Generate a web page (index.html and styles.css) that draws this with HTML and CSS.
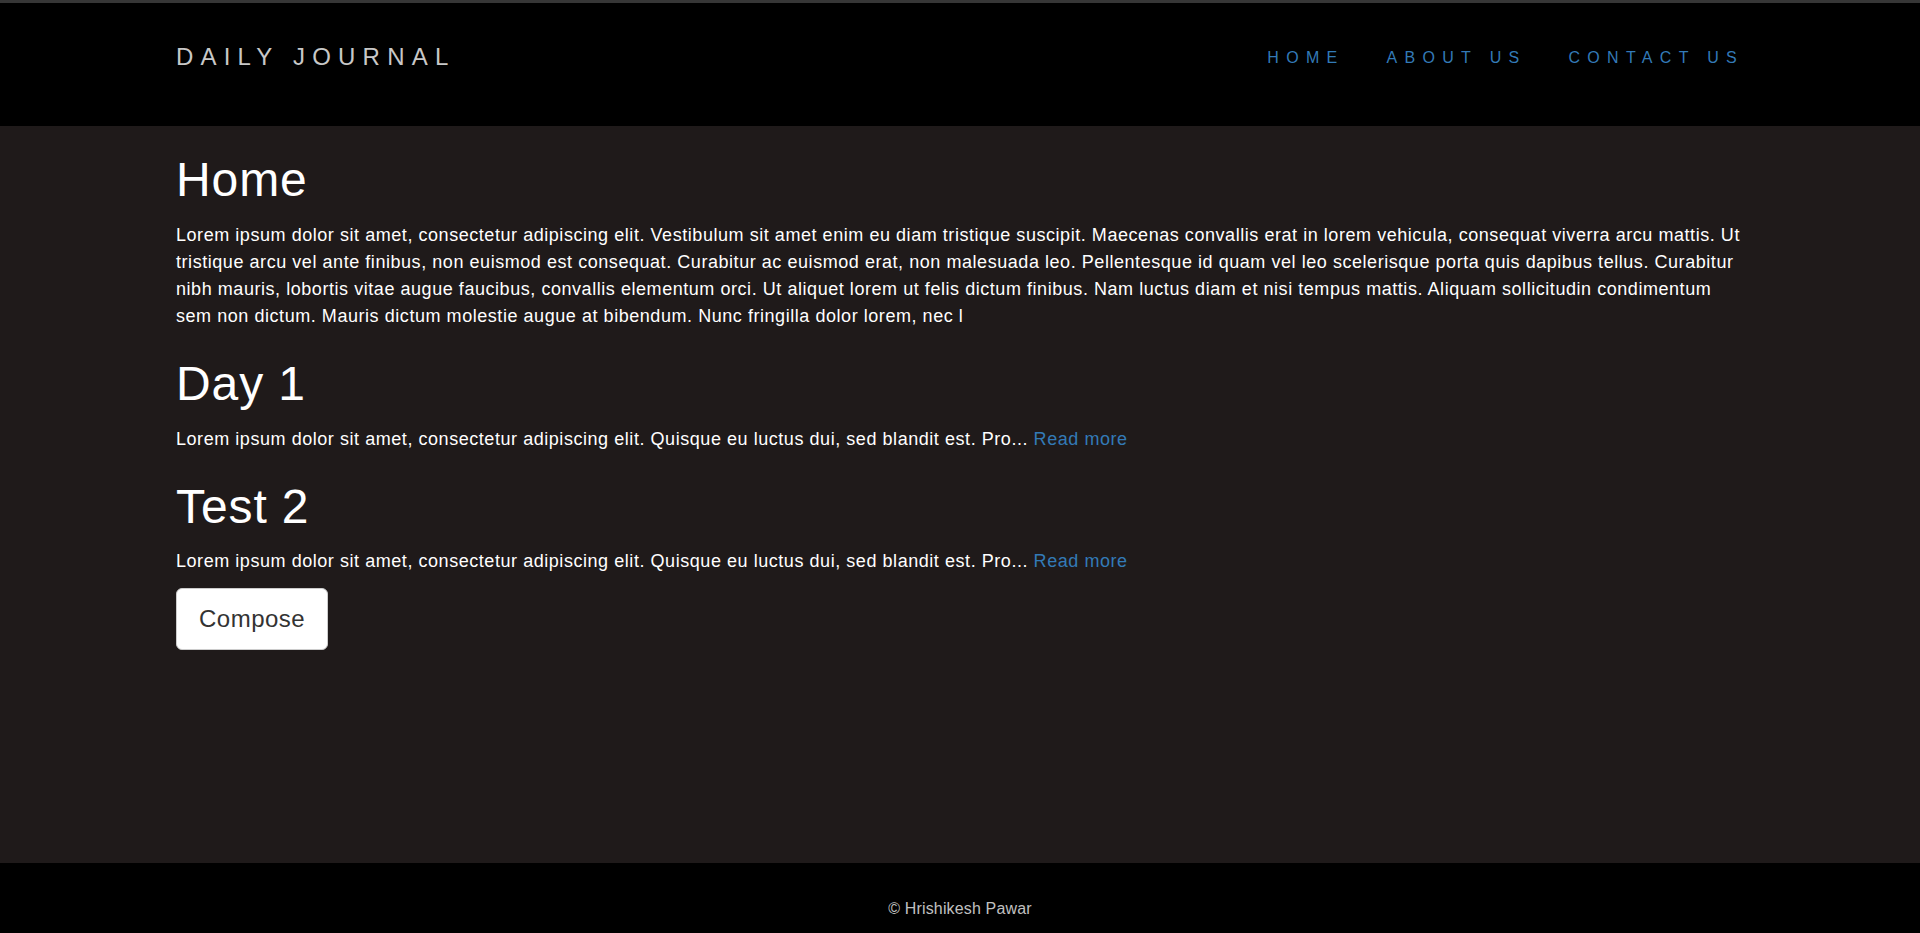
FILE: index.html
```html
<!DOCTYPE html>
<html lang="en">
<head>
<meta charset="utf-8">
<title>Daily Journal</title>
<link rel="stylesheet" href="styles.css">
</head>
<body>
<header class="site-header">
  <div class="container header-inner">
    <a class="brand" href="#">Daily Journal</a>
    <nav class="main-nav">
      <a href="#">Home</a>
      <a href="#">About Us</a>
      <a href="#">Contact Us</a>
    </nav>
  </div>
</header>
<main class="site-main">
  <div class="container">
    <h1 class="title">Home</h1>
    <p class="text">Lorem ipsum dolor sit amet, consectetur adipiscing elit. Vestibulum sit amet enim eu diam tristique suscipit. Maecenas convallis erat in lorem vehicula, consequat viverra arcu mattis. Ut tristique arcu vel ante finibus, non euismod est consequat. Curabitur ac euismod erat, non malesuada leo. Pellentesque id quam vel leo scelerisque porta quis dapibus tellus. Curabitur nibh mauris, lobortis vitae augue faucibus, convallis elementum orci. Ut aliquet lorem ut felis dictum finibus. Nam luctus diam et nisi tempus mattis. Aliquam sollicitudin condimentum sem non dictum. Mauris dictum molestie augue at bibendum. Nunc fringilla dolor lorem, nec l</p>

    <h1 class="title">Day 1</h1>
    <p class="text">Lorem ipsum dolor sit amet, consectetur adipiscing elit. Quisque eu luctus dui, sed blandit est. Pro... <a class="more" href="#">Read more</a></p>

    <h1 class="title">Test 2</h1>
    <p class="text">Lorem ipsum dolor sit amet, consectetur adipiscing elit. Quisque eu luctus dui, sed blandit est. Pro... <a class="more" href="#">Read more</a></p>

    <button class="compose-btn" type="button">Compose</button>
  </div>
</main>
<footer class="site-footer">
  <p class="copy">© Hrishikesh Pawar</p>
</footer>
</body>
</html>
```

FILE: styles.css
```css
* {
  box-sizing: border-box;
}

html, body {
  margin: 0;
  padding: 0;
}

body {
  font-family: "Liberation Sans", Arial, Helvetica, sans-serif;
  background: #1f1a1a;
  color: #ffffff;
  min-height: 100vh;
  display: flex;
  flex-direction: column;
}

a {
  text-decoration: none;
}

.container {
  width: 1600px;
  margin: 0 auto;
  padding: 0 16px;
}

/* Header */
.site-header {
  background: #000000;
  border-top: 3px solid #363636;
  height: 126px;
}

.header-inner {
  display: flex;
  justify-content: space-between;
  align-items: flex-start;
  padding-top: 42px;
}

.brand {
  font-size: 24px;
  line-height: 24px;
  letter-spacing: 0.3em;
  text-transform: uppercase;
  color: #c8c8c8;
}

.main-nav {
  display: flex;
  gap: 42px;
  padding-top: 5px;
  margin-right: 0;
}

.main-nav a {
  font-size: 16px;
  line-height: 16px;
  letter-spacing: 7.3px;
  text-transform: uppercase;
  color: #337ab7;
}

/* Main */
.site-main {
  flex: 1;
}

.title {
  font-size: 48px;
  font-weight: normal;
  line-height: 1.1;
  letter-spacing: 0.9px;
  margin: 28px 0 15px;
  color: #ffffff;
}

.text {
  font-size: 18px;
  line-height: 27px;
  letter-spacing: 0.55px;
  margin: 0;
  color: #ffffff;
}

.more {
  color: #337ab7;
}

.compose-btn {
  margin-top: 13px;
  font-family: "Liberation Sans", Arial, Helvetica, sans-serif;
  font-size: 24px;
  line-height: 30px;
  letter-spacing: 0.5px;
  padding: 15px 22px;
  border: 1px solid #cccccc;
  border-radius: 6px;
  background: #ffffff;
  color: #333333;
  cursor: pointer;
}

/* Footer */
.site-footer {
  background: #000000;
  height: 70px;
  padding-top: 38px;
}

.copy {
  margin: 0;
  text-align: center;
  font-size: 16px;
  line-height: 16px;
  letter-spacing: 0.15px;
  color: #c0c0c0;
}
```
